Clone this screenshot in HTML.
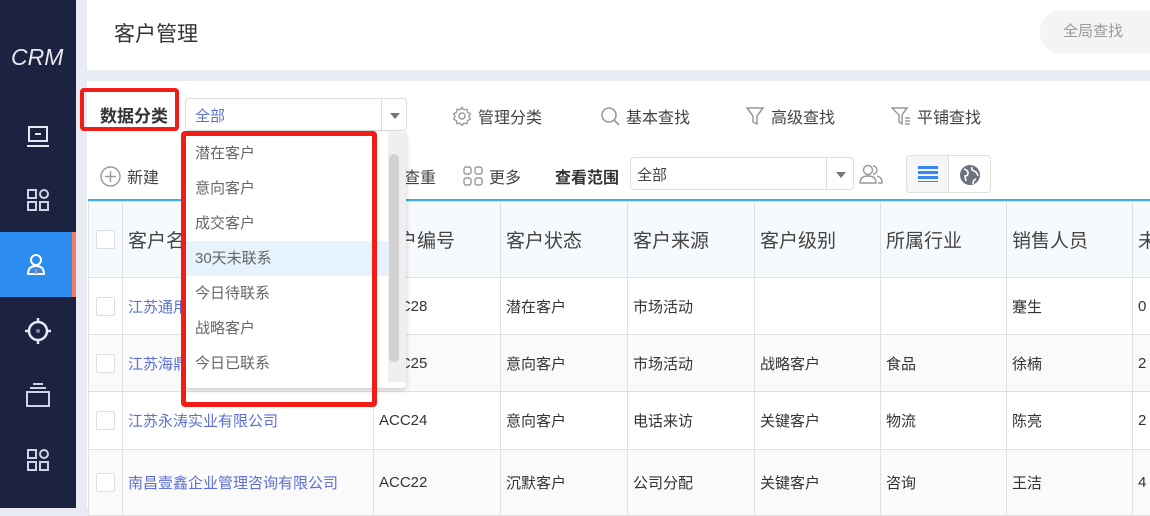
<!DOCTYPE html>
<html><head><meta charset="utf-8"><style>
*{box-sizing:border-box;margin:0;padding:0}
body{width:1150px;height:508px;overflow:hidden;background:#e8ebf1;font-family:"Liberation Sans","Noto Sans CJK SC",sans-serif;position:relative;color:#333}
.a{position:absolute}
.sb{left:0;top:0;width:76px;height:508px;background:#1b2340}
.ic{position:absolute;left:0;width:76px;display:flex;justify-content:center}
.hd{left:87px;top:0;width:1063px;height:70px;background:#fff}
.pn{left:87px;top:81px;width:1063px;height:427px;background:#fff}
table{border-collapse:collapse;position:absolute;left:88px;top:201px;table-layout:fixed;width:1074px}
td{border:1px solid #e0e0e0;font-size:15px;padding-left:5px;white-space:nowrap;overflow:hidden}
th{border:1px solid #e0e0e0;font-size:19px;font-weight:normal;text-align:left;padding-left:5px;color:#444;background:#f6fafd;height:76px;white-space:nowrap;overflow:hidden}
.cb{width:19px;height:19px;border:1px solid #ddd;border-radius:2px;background:#fff;display:inline-block;vertical-align:middle}
.lk{color:#5b6fd6}
.g td{background:#fafafa}
.tb{font-size:16px;color:#444;display:flex;align-items:center;gap:6px}
.dd div{height:35px;line-height:35px;padding-left:10px;font-size:15px;color:#666}
</style></head><body>
<div class="a sb">
 <div class="a" style="left:11px;top:44px;color:#e8e8ee;font-size:23px;font-style:italic">CRM</div>
 <div class="ic" style="top:124px"><svg width="26" height="26" viewBox="0 0 26 26" fill="none" stroke="#e6e8f4" stroke-width="2"><rect x="4" y="3" width="18" height="14"/><line x1="10" y1="10" x2="16" y2="10"/><line x1="2" y1="22" x2="24" y2="22"/></svg></div>
 <div class="ic" style="top:188px"><svg width="24" height="24" viewBox="0 0 24 24" fill="none" stroke="#d0d3e6" stroke-width="2"><rect x="2" y="2" width="8" height="8"/><circle cx="18" cy="6" r="4"/><rect x="2" y="14" width="8" height="8"/><rect x="14" y="14" width="8" height="8"/></svg></div>
 <div class="a" style="left:0;top:232px;width:72px;height:65px;background:#2d8cf0"></div>
 <div class="a" style="left:72px;top:232px;width:4px;height:65px;background:#f08060"></div>
 <div class="ic" style="top:252px;width:72px"><svg width="22" height="24" viewBox="0 0 22 24" fill="none" stroke="#fff" stroke-width="2"><circle cx="11" cy="8" r="5"/><path d="M3 22 Q3 14 11 14 Q19 14 19 22 Z"/><line x1="11" y1="17" x2="11" y2="22" stroke="#f08060"/></svg></div>
 <div class="ic" style="top:317px"><svg width="28" height="28" viewBox="0 0 28 28" fill="none" stroke="#e6e8f4" stroke-width="2.5"><circle cx="14" cy="14" r="9"/><line x1="14" y1="1" x2="14" y2="6"/><line x1="14" y1="22" x2="14" y2="27"/><line x1="1" y1="14" x2="6" y2="14"/><line x1="22" y1="14" x2="27" y2="14"/><circle cx="14" cy="14" r="2" fill="#8088a8" stroke="none"/></svg></div>
 <div class="ic" style="top:382px"><svg width="26" height="26" viewBox="0 0 26 26" fill="none" stroke="#d0d3e6" stroke-width="2"><line x1="8" y1="2" x2="18" y2="2"/><line x1="5" y1="6" x2="21" y2="6"/><rect x="2" y="10" width="22" height="14"/></svg></div>
 <div class="ic" style="top:448px"><svg width="24" height="24" viewBox="0 0 24 24" fill="none" stroke="#d0d3e6" stroke-width="2"><rect x="2" y="2" width="8" height="8"/><circle cx="18" cy="6" r="4"/><rect x="2" y="14" width="8" height="8"/><rect x="14" y="14" width="8" height="8"/></svg></div>
</div>
<div class="a hd">
 <div class="a" style="left:27px;top:18px;font-size:21px;color:#333">客户管理</div>
 <div class="a" style="left:952px;top:11px;width:130px;height:42px;border-radius:21px;background:#f4f4f4;color:#999;font-size:15px;line-height:42px;padding-left:24px">全局查找</div>
</div>
<div class="a pn"></div>
<div class="a" style="left:80px;top:88px;width:99px;height:43px;border:4px solid #f21d16;border-radius:4px"></div>
<div class="a" style="left:100px;top:102px;font-size:17px;font-weight:bold;color:#333">数据分类</div>
<div class="a" style="left:185px;top:98px;width:222px;height:33px;border:1px solid #ddd;border-radius:4px;background:#fff">
 <div class="a" style="left:9px;top:6px;font-size:15px;color:#5b6fd6">全部</div>
 <div class="a" style="left:195px;top:0;width:1px;height:31px;background:#ddd"></div>
 <div class="a" style="left:204px;top:14px;border:5px solid transparent;border-top:6px solid #777"></div>
</div>
<div class="a tb" style="left:452px;top:104px"><svg width="20" height="20" viewBox="0 0 20 20" fill="none" stroke="#999" stroke-width="1.4"><circle cx="10" cy="10" r="3"/><path d="M10 1.5l2 2.3 3-.5.6 3 2.7 1.5-1.3 2.7 1.3 2.7-2.7 1.5-.6 3-3-.5-2 2.3-2-2.3-3 .5-.6-3-2.7-1.5 1.3-2.7-1.3-2.7 2.7-1.5.6-3 3 .5z"/></svg>管理分类</div>
<div class="a tb" style="left:600px;top:104px"><svg width="20" height="20" viewBox="0 0 20 20" fill="none" stroke="#999" stroke-width="1.6"><circle cx="9" cy="9" r="7"/><line x1="14" y1="14" x2="19" y2="19"/></svg>基本查找</div>
<div class="a tb" style="left:745px;top:104px"><svg width="20" height="20" viewBox="0 0 20 20" fill="none" stroke="#999" stroke-width="1.5"><path d="M2 2h16l-6 8v8l-4-2v-6z"/></svg>高级查找</div>
<div class="a tb" style="left:891px;top:104px"><svg width="20" height="20" viewBox="0 0 20 20" fill="none" stroke="#999" stroke-width="1.5"><path d="M1 2h15l-5 7v9l-3-2v-7z"/><line x1="14" y1="12" x2="19" y2="12"/><line x1="14" y1="15" x2="19" y2="15"/><line x1="14" y1="18" x2="19" y2="18"/></svg>平铺查找</div>
<div class="a tb" style="left:100px;top:164px"><svg width="21" height="21" viewBox="0 0 21 21" fill="none" stroke="#999" stroke-width="1.4"><circle cx="10.5" cy="10.5" r="9.5"/><line x1="10.5" y1="5" x2="10.5" y2="16"/><line x1="5" y1="10.5" x2="16" y2="10.5"/></svg>新建</div>
<div class="a tb" style="left:404px;top:164px">查重</div>
<div class="a tb" style="left:463px;top:164px"><svg width="20" height="20" viewBox="0 0 20 20" fill="none" stroke="#999" stroke-width="1.4"><rect x="1" y="1" width="7" height="7" rx="2"/><rect x="12" y="1" width="7" height="7" rx="2"/><rect x="1" y="12" width="7" height="7" rx="2"/><rect x="12" y="12" width="7" height="7" rx="2"/></svg>更多</div>
<div class="a" style="left:555px;top:164px;font-size:16px;font-weight:bold;color:#333">查看范围</div>
<div class="a" style="left:630px;top:157px;width:224px;height:33px;border:1px solid #ddd;border-radius:4px;background:#fff">
 <div class="a" style="left:6px;top:6px;font-size:15px;color:#444">全部</div>
 <div class="a" style="left:195px;top:0;width:1px;height:31px;background:#ddd"></div>
 <div class="a" style="left:205px;top:14px;border:5px solid transparent;border-top:6px solid #777"></div>
</div>
<div class="a" style="left:859px;top:163px"><svg width="24" height="22" viewBox="0 0 24 22" fill="none" stroke="#999" stroke-width="1.4"><circle cx="9" cy="7" r="4.5"/><path d="M1 20q0-7 8-7t8 7z"/><path d="M14 3a4 4 0 0 1 0 8M18 13q5 1 5 7h-4"/></svg></div>
<div class="a" style="left:906px;top:155px;width:85px;height:38px;border:1px solid #ddd;border-radius:4px;background:#fff;overflow:hidden">
 <div class="a" style="left:0;top:0;width:42px;height:38px;background:#f5f6f8;border-right:1px solid #ddd"></div>
 <div class="a" style="left:11px;top:10px;width:20px;height:16px;background:repeating-linear-gradient(#3a84f0 0 3px,transparent 3px 5px)"></div>
 <svg class="a" style="left:52px;top:8px" width="22" height="22" viewBox="0 0 22 22"><circle cx="11" cy="11" r="10" fill="#6b7280"/><path d="M5 5q4 1 4 4t-3 3l1 5M13 3q-1 3 2 4t4 5M14 20q0-4 3-5" fill="none" stroke="#fff" stroke-width="1.6"/></svg>
</div>
<div class="a" style="left:88px;top:199px;width:1062px;height:2px;background:#3eaee2"></div>
<table>
<colgroup><col style="width:34px"><col style="width:251px"><col style="width:127px"><col style="width:127px"><col style="width:127px"><col style="width:126px"><col style="width:126px"><col style="width:126px"><col style="width:30px"></colgroup>
<tr><th style="padding-left:7px"><span class="cb"></span></th><th>客户名称</th><th>客户编号</th><th>客户状态</th><th>客户来源</th><th>客户级别</th><th>所属行业</th><th>销售人员</th><th>未</th></tr>
<tr style="height:57px"><td style="padding-left:7px"><span class="cb"></span></td><td class="lk">江苏通用</td><td>ACC28</td><td>潜在客户</td><td>市场活动</td><td></td><td></td><td>蹇生</td><td>0</td></tr>
<tr class="g" style="height:57px"><td style="padding-left:7px"><span class="cb"></span></td><td class="lk">江苏海鼎</td><td>ACC25</td><td>意向客户</td><td>市场活动</td><td>战略客户</td><td>食品</td><td>徐楠</td><td>2</td></tr>
<tr style="height:58px"><td style="padding-left:7px"><span class="cb"></span></td><td class="lk">江苏永涛实业有限公司</td><td>ACC24</td><td>意向客户</td><td>电话来访</td><td>关键客户</td><td>物流</td><td>陈亮</td><td>2</td></tr>
<tr class="g" style="height:66px"><td style="padding-left:7px"><span class="cb"></span></td><td class="lk">南昌壹鑫企业管理咨询有限公司</td><td>ACC22</td><td>沉默客户</td><td>公司分配</td><td>关键客户</td><td>咨询</td><td>王洁</td><td>4</td></tr>
</table>
<div class="a dd" style="left:185px;top:132px;width:221px;height:256px;background:#fff;border-radius:0 0 4px 4px;box-shadow:0 2px 6px rgba(0,0,0,.2);padding-top:4px">
 <div>潜在客户</div><div>意向客户</div><div>成交客户</div><div style="background:#e6f2fc">30天未联系</div><div>今日待联系</div><div>战略客户</div><div>今日已联系</div>
 <div class="a" style="left:203px;top:0;width:18px;height:250px;background:#efefef"></div>
 <div class="a" style="left:204px;top:22px;width:10px;height:208px;background:#d2d2d2;border-radius:5px"></div>
</div>
<div class="a" style="left:181px;top:131px;width:196px;height:276px;border:5px solid #f21d16;border-radius:4px"></div>
</body></html>
